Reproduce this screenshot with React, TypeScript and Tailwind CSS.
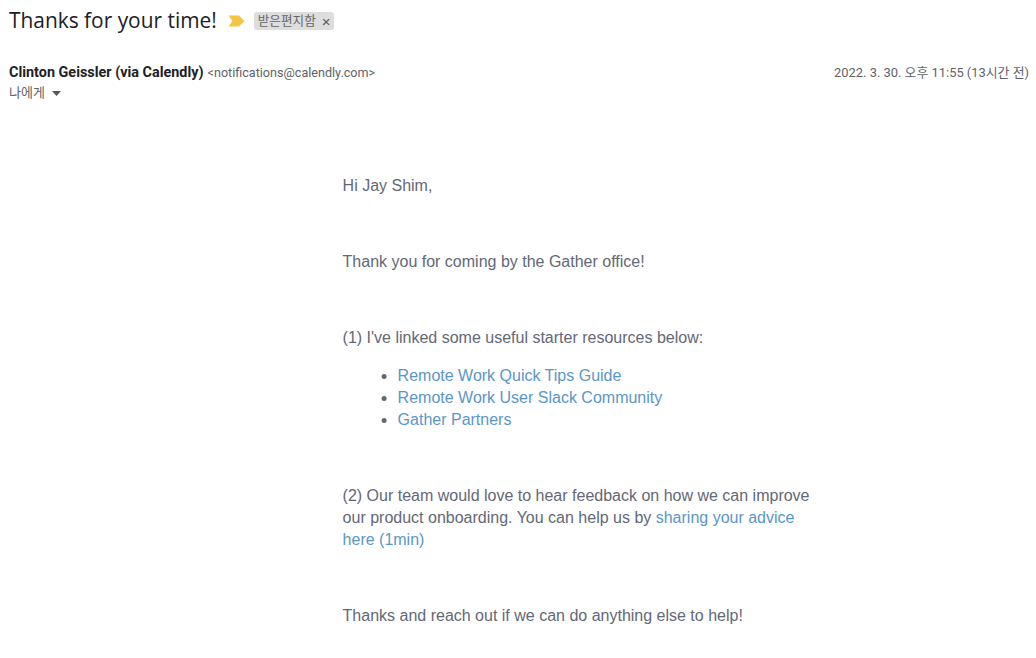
import React from "react";

function Link({ children }: { children: React.ReactNode }) {
  return <span className="text-[#5b96c8]">{children}</span>;
}

export default function App() {
  return (
    <div className="w-[1036px] h-[658px] overflow-hidden bg-white font-['Liberation_Sans','Noto_Sans_CJK_KR',sans-serif]">
      <div className="flex items-center h-[42px] pl-[9px]">
        <h1 className="text-[20.9px] text-[#202124] font-['Open_Sans','Noto_Sans_CJK_KR',sans-serif]">Thanks for your time!</h1>
        <svg width="17" height="12" viewBox="0 0 17 12" className="ml-[11px]">
          <path d="M0.5 0.5h10.5l5.5 5.5-5.5 5.5H0.5l4-5.5z" fill="#f4c542" />
        </svg>
        <span className="ml-[9px] flex items-center h-[18px] pl-[4px] pr-[4px] rounded-[3px] bg-[#dddddd] text-[12.6px] text-[#666666]">
          받은편지함<span className="ml-[6px] text-[15px] leading-none text-[#555555]">×</span>
        </span>
      </div>
      <div className="flex justify-between pl-[9px] pr-[7px] mt-[22px] h-[18px] items-center">
        <div className="flex items-center">
          <span className="text-[14.4px] font-bold text-[#202124] font-['Roboto',sans-serif]">Clinton Geissler (via Calendly)</span>
          <span className="ml-[4px] text-[12.6px] text-[#5f6368] font-['Roboto',sans-serif]">&lt;notifications@calendly.com&gt;</span>
        </div>
        <span className="text-[12.9px] text-[#5f6368] font-['Roboto','Noto_Sans_CJK_KR',sans-serif]">2022. 3. 30. 오후 11:55 (13시간 전)</span>
      </div>
      <div className="flex items-center pl-[9px] mt-[2px] h-[18px] text-[13px] text-[#5f6368]">
        나에게
        <svg width="9" height="5" viewBox="0 0 9 5" className="ml-[7px]"><path d="M0 0h9L4.5 5z" fill="#555" /></svg>
      </div>
      <div className="ml-[343px] w-[480px] mt-[73px] -translate-x-[0.4px] text-[16px] leading-[22px] text-[#636876]">
        <p>Hi Jay Shim,</p>
        <p className="mt-[54px]">Thank you for coming by the Gather office!</p>
        <p className="mt-[54px]">(1) I've linked some useful starter resources below:</p>
        <ul className="list-disc pl-[55px] mt-[16px]">
          <li><Link>Remote Work Quick Tips Guide</Link></li>
          <li><Link>Remote Work User Slack Community</Link></li>
          <li><Link>Gather Partners</Link></li>
        </ul>
        <p className="mt-[54px]">(2) Our team would love to hear feedback on how we can improve our product onboarding. You can help us by <Link>sharing your advice here (1min)</Link></p>
        <p className="mt-[54px]">Thanks and reach out if we can do anything else to help!</p>
      </div>
    </div>
  );
}
